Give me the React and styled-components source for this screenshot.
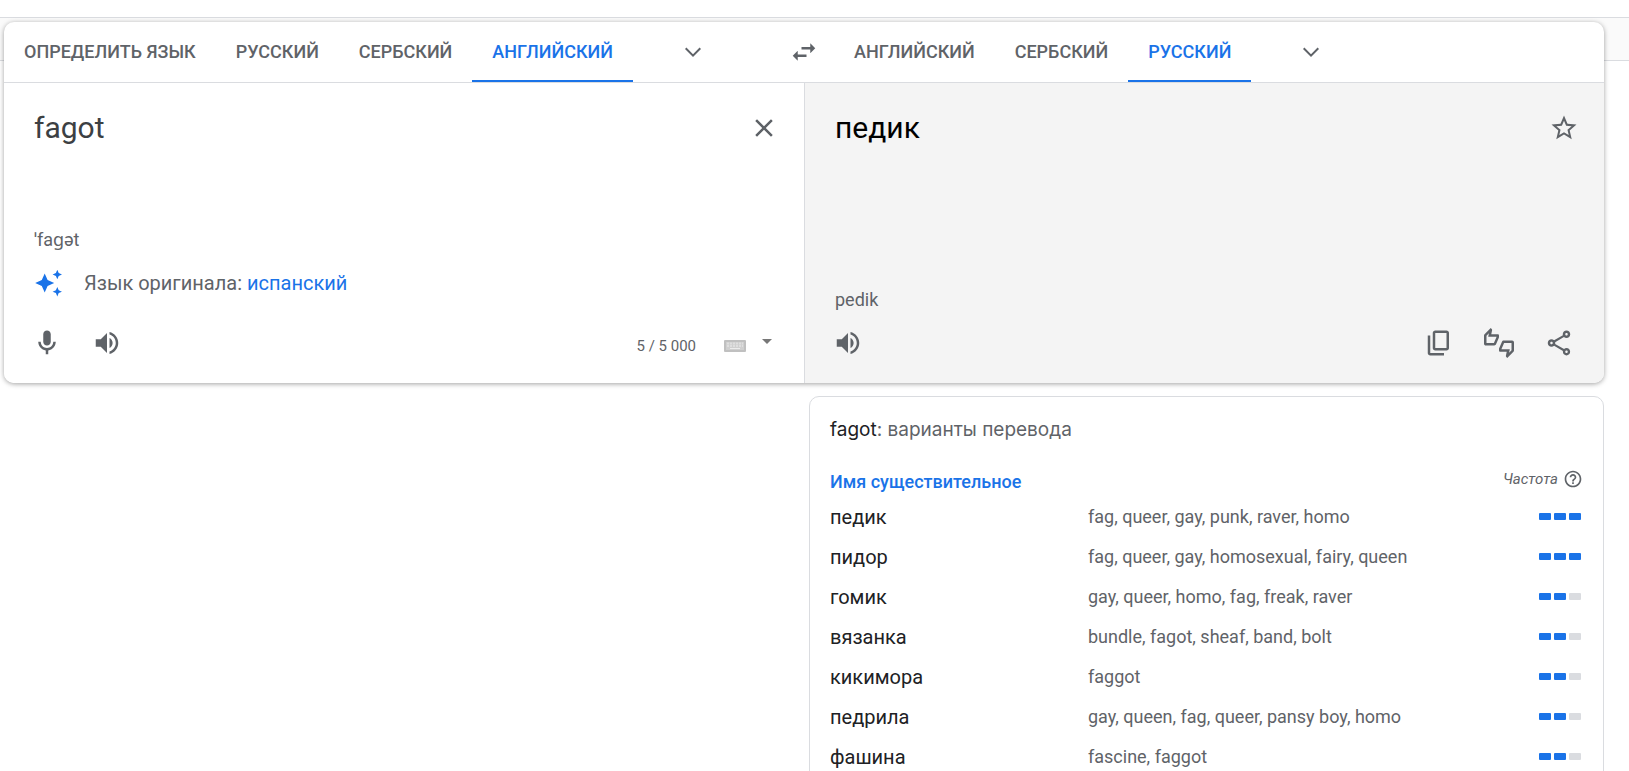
import React from "react";
import styled, { createGlobalStyle } from "styled-components";

const GlobalStyle = createGlobalStyle`
  *, *::before, *::after { box-sizing: border-box; }
  body {
    margin: 0;
    background: #fff;
    color: #5f6368;
    font-family: Roboto, "Noto Sans", sans-serif;
  }
  button, textarea { font: inherit; color: inherit; }
`;

const TopBar = styled.header`
  height: 18px;
  border-bottom: 1px solid #dadce0;
`;

const Band = styled.div`
  height: 43px;
  background: #fafafa;
  border-bottom: 1px solid #dadce0;
`;

const Main = styled.main`
  margin: -39px 25px 0 4px;
`;

const Translator = styled.section`
  position: relative;
  border-radius: 10px;
  background: #fff;
  box-shadow: 0 1px 5px 0 rgba(0, 0, 0, 0.37);
  overflow: hidden;
`;

const LanguageBar = styled.div`
  display: flex;
  height: 61px;
  border-bottom: 1px solid #dadce0;
`;

const LanguageSide = styled.div`
  flex: 1 1 0;
  display: flex;
  min-width: 0;
`;

const Tab = styled.button`
  height: 60px;
  padding: 2px 20px 0;
  border: 0;
  border-bottom: 2px solid ${(p) => (p.$active ? "#1a73e8" : "transparent")};
  background: none;
  color: ${(p) => (p.$active ? "#1a73e8" : "#5f6368")};
  font-size: 18px;
  font-weight: 500;
  line-height: 24px;
  white-space: nowrap;
  text-transform: uppercase;
  cursor: pointer;
`;

const IconButton = styled.button`
  display: flex;
  flex: none;
  align-items: center;
  justify-content: center;
  width: ${(p) => p.$width || 60}px;
  height: ${(p) => p.$height || 60}px;
  padding: 0;
  border: 0;
  background: none;
  color: #5f6368;
  cursor: pointer;
`;

const MoreButton = styled(IconButton)`
  margin-left: 40px;
`;

const Panes = styled.div`
  display: grid;
  grid-template-columns: 1fr 1fr;
`;

const Pane = styled.div`
  display: flex;
  flex-direction: column;
  min-height: 300px;
  padding: 25px 0 10px;
  background: ${(p) => (p.$target ? "#f4f4f4" : "#fff")};
  border-left: ${(p) => (p.$target ? "1px solid #dadce0" : "0")};
`;

const TextRow = styled.div`
  flex: 1;
  display: flex;
  align-items: flex-start;
  padding: 0 20px 0 30px;
`;

const SourceText = styled.textarea`
  flex: 1;
  height: 80px;
  padding: 0;
  border: 0;
  outline: 0;
  resize: none;
  background: none;
  color: #3c4043;
  font-size: 30px;
  line-height: 40px;
`;

const TargetText = styled.div`
  flex: 1;
  color: #000;
  font-size: 30px;
  line-height: 40px;
`;

const Phonetic = styled.div`
  padding: 0 30px 1px;
  font-size: 18px;
  line-height: 25px;
`;

const Suggestion = styled.div`
  display: flex;
  align-items: center;
  gap: 20px;
  height: 60px;
  padding: 0 30px;
  font-size: 20px;
  line-height: 30px;
`;

const LanguageLink = styled.a`
  color: #1a73e8;
  text-decoration: none;
`;

const Toolbar = styled.div`
  display: flex;
  align-items: center;
  height: 60px;
  padding: 0 15px 0 13px;
`;

const Spacer = styled.div`
  flex: 1;
`;

const Counter = styled.span`
  padding-top: 5px;
  margin-right: 28px;
  font-size: 15px;
  line-height: 20px;
`;

const InputTools = styled.div`
  display: flex;
  align-items: flex-start;
  gap: 16px;
  margin-right: 17px;
`;

const DetailsColumn = styled.div`
  margin: 13px 0 0 calc(50% + 5px);
`;

const Details = styled.section`
  padding: 19px 22px 10px 20px;
  border: 1px solid #dadce0;
  border-radius: 10px;
`;

const DetailsTitle = styled.h2`
  margin: 0;
  color: #5f6368;
  font-family: Inter, Roboto, sans-serif;
  font-size: 19px;
  font-weight: 400;
  line-height: 28px;
`;

const TitleWord = styled.span`
  color: #202124;
`;

const Variants = styled.table`
  width: 100%;
  margin-top: 22px;
  border-collapse: collapse;
  table-layout: fixed;
`;

const PartOfSpeech = styled.th`
  height: 31px;
  padding: 0;
  color: #1a73e8;
  font-size: 18px;
  font-weight: 500;
  line-height: 24px;
  text-align: left;
`;

const FrequencyHead = styled.th`
  padding: 0 0 6px;
  font-size: 15px;
  font-weight: 400;
  font-style: italic;
  line-height: 20px;
`;

const FrequencyLabel = styled.div`
  display: flex;
  align-items: center;
  justify-content: flex-end;
  gap: 5px;
  margin-right: -2px;
`;

const Word = styled.th`
  height: 40px;
  padding: 0;
  color: #202124;
  font-size: 20px;
  font-weight: 400;
  line-height: 30px;
  text-align: left;
`;

const Meanings = styled.td`
  padding: 0;
  font-size: 18px;
  line-height: 30px;
`;

const FrequencyCell = styled.td`
  padding: 0 0 2px;
`;

const Bars = styled.div`
  display: flex;
  justify-content: flex-end;
  gap: 3px;
`;

const Bar = styled.span`
  width: 12px;
  height: 7px;
  border-radius: 1px;
  background: ${(p) => (p.$on ? "#1a73e8" : "#dadce0")};
`;

const paths = {
  chevron: "M5.41 7.59L4 9l8 8 8-8-1.41-1.41L12 14.17z",
  swap: "M6.99 11L3 15l3.99 4v-3H14v-2H6.99v-3zM21 9l-3.99-4v3H10v2h7.01v3L21 9z",
  close:
    "M19 6.41L17.59 5 12 10.59 6.41 5 5 6.41 10.59 12 5 17.59 6.41 19 12 13.41 17.59 19 19 17.59 13.41 12z",
  star: "M22 9.24l-7.19-.62L12 2 9.19 8.63 2 9.24l5.46 4.73L5.82 21 12 17.27 18.18 21l-1.63-7.03L22 9.24zM12 15.4l-3.76 2.27 1-4.28-3.32-2.88 4.38-.38L12 6.1l1.71 4.04 4.38.38-3.32 2.88 1 4.28L12 15.4z",
  mic: "M12 14c1.66 0 3-1.34 3-3V5c0-1.66-1.34-3-3-3S9 3.34 9 5v6c0 1.66 1.34 3 3 3zM17 11c0 2.76-2.24 5-5 5s-5-2.24-5-5H5c0 3.53 2.61 6.43 6 6.92V21h2v-3.08c3.39-.49 6-3.39 6-6.92h-2z",
  speaker:
    "M3 9v6h4l5 5V4L7 9H3zm13.5 3c0-1.77-1.02-3.29-2.5-4.03v8.05c1.48-.73 2.5-2.25 2.5-4.02zM14 3.23v2.06c2.89.86 5 3.54 5 6.71s-2.11 5.85-5 6.71v2.06c4.01-.91 7-4.49 7-8.77s-2.99-7.86-7-8.77z",
  copy: "M9 18q-.825 0-1.412-.587T7 16V4q0-.825.588-1.413T9 2h9q.825 0 1.413.588T20 4v12q0 .825-.587 1.413T18 18zm0-2h9V4H9zm-4 6q-.825 0-1.412-.587T3 20V6h2v14h11v2z",
  rate: "M12 6c0-.55-.45-1-1-1H5.82l.66-3.18.02-.23c0-.31-.13-.59-.33-.8L5.38 0 .44 4.94C.17 5.21 0 5.59 0 6v6.5c0 .83.67 1.5 1.5 1.5h6.75c.62 0 1.15-.38 1.38-.91l2.26-5.29c.07-.17.11-.36.11-.55V6zm-2 1.13L7.92 12H2V6.21l1.93-1.93L3.36 7H10v.13zM22.5 10h-6.75c-.62 0-1.15.38-1.38.91l-2.26 5.29c-.07.17-.11.36-.11.55V18c0 .55.45 1 1 1h5.18l-.66 3.18-.02.24c0 .31.13.59.33.8l.79.78 4.94-4.94c.27-.27.44-.65.44-1.06v-6.5c0-.83-.67-1.5-1.5-1.5zm-.5 7.79l-1.93 1.93.57-2.72H14v-.13L16.08 12H22v5.79z",
  share:
    "M18 16.08c-.76 0-1.44.3-1.96.77L8.91 12.7c.05-.23.09-.46.09-.7s-.04-.47-.09-.7l7.05-4.11c.54.5 1.25.81 2.04.81 1.66 0 3-1.34 3-3s-1.34-3-3-3-3 1.34-3 3c0 .24.04.47.09.7L8.04 9.81C7.5 9.31 6.79 9 6 9c-1.66 0-3 1.34-3 3s1.34 3 3 3c.79 0 1.5-.31 2.04-.81l7.12 4.16c-.05.21-.08.43-.08.65 0 1.61 1.31 2.92 2.92 2.92s2.92-1.31 2.92-2.92-1.31-2.92-2.92-2.92zM18 4c.55 0 1 .45 1 1s-.45 1-1 1-1-.45-1-1 .45-1 1-1zM6 13c-.55 0-1-.45-1-1s.45-1 1-1 1 .45 1 1-.45 1-1 1zm12 7.02c-.55 0-1-.45-1-1s.45-1 1-1 1 .45 1 1-.45 1-1 1z",
  help: "M11 18h2v-2h-2v2zm1-16C6.48 2 2 6.48 2 12s4.48 10 10 10 10-4.48 10-10S17.52 2 12 2zm0 18c-4.41 0-8-3.59-8-8s3.59-8 8-8 8 3.59 8 8-3.59 8-8 8zm0-14c-2.21 0-4 1.79-4 4h2c0-1.1.9-2 2-2s2 .9 2 2c0 2-3 1.75-3 5h2c0-2.25 3-2.5 3-5 0-2.21-1.79-4-4-4z",
};

function Icon({ name, size = 30 }) {
  return (
    <svg width={size} height={size} viewBox="0 0 24 24" fill="currentColor" aria-hidden="true">
      <path d={paths[name]} />
    </svg>
  );
}

function Sparkles() {
  return (
    <svg width="30" height="30" viewBox="0 0 30 30" fill="#1a73e8" aria-hidden="true">
      <path d="M10.7 5.5L13.6 12.1 20.2 15 13.6 17.9 10.7 24.5 7.8 17.9 1.2 15 7.8 12.1z" />
      <path d="M23.3 1.8L24.7 5.1 28 6.5 24.7 7.9 23.3 11.2 21.9 7.9 18.6 6.5 21.9 5.1z" />
      <path d="M23.3 19L24.7 22.3 28 23.7 24.7 25.1 23.3 28.4 21.9 25.1 18.6 23.7 21.9 22.3z" />
    </svg>
  );
}

function Keyboard() {
  return (
    <svg width="22" height="20" viewBox="0 0 22 20" aria-hidden="true">
      <rect y="7" width="22" height="12" rx="1" fill="#c0c0c0" />
      <rect x="2" y="9" width="18" height="8" fill="#cfcfcf" />
      <path d="M3 10.5h16M3 13h16" stroke="#dedede" strokeWidth="2" strokeDasharray="2 1" />
      <path d="M6 15.5h10" stroke="#ececec" strokeWidth="1" />
    </svg>
  );
}

function Caret() {
  return (
    <svg width="10" height="10" viewBox="0 0 10 10" aria-hidden="true">
      <path d="M0 4h10L5 9z" fill="#777" />
    </svg>
  );
}

const sourceLanguages = ["Определить язык", "Русский", "Сербский", "Английский"];
const targetLanguages = ["Английский", "Сербский", "Русский"];

const variants = [
  ["педик", "fag, queer, gay, punk, raver, homo", 3],
  ["пидор", "fag, queer, gay, homosexual, fairy, queen", 3],
  ["гомик", "gay, queer, homo, fag, freak, raver", 2],
  ["вязанка", "bundle, fagot, sheaf, band, bolt", 2],
  ["кикимора", "faggot", 2],
  ["педрила", "gay, queen, fag, queer, pansy boy, homo", 2],
  ["фашина", "fascine, faggot", 2],
];

function LanguageTabs({ languages, active }) {
  return (
    <LanguageSide>
      {languages.map((name) => (
        <Tab key={name} type="button" $active={name === active} aria-pressed={name === active}>
          {name}
        </Tab>
      ))}
      <MoreButton type="button" $width={40} aria-label="Другие языки">
        <Icon name="chevron" size={24} />
      </MoreButton>
    </LanguageSide>
  );
}

export default function App() {
  return (
    <>
      <GlobalStyle />
      <TopBar />
      <Band />
      <Main>
        <Translator>
          <LanguageBar>
            <LanguageTabs languages={sourceLanguages} active="Английский" />
            <IconButton type="button" aria-label="Поменять языки местами">
              <Icon name="swap" />
            </IconButton>
            <LanguageTabs languages={targetLanguages} active="Русский" />
          </LanguageBar>
          <Panes>
            <Pane>
              <TextRow>
                <SourceText aria-label="Исходный текст" defaultValue="fagot" spellCheck={false} />
                <IconButton type="button" $width={40} $height={40} aria-label="Очистить">
                  <Icon name="close" />
                </IconButton>
              </TextRow>
              <Phonetic>ˈfaɡət</Phonetic>
              <Suggestion>
                <Sparkles />
                <span>
                  Язык оригинала: <LanguageLink href="#es">испанский</LanguageLink>
                </span>
              </Suggestion>
              <Toolbar>
                <IconButton type="button" aria-label="Голосовой ввод">
                  <Icon name="mic" />
                </IconButton>
                <IconButton type="button" aria-label="Прослушать">
                  <Icon name="speaker" />
                </IconButton>
                <Spacer />
                <Counter>5 / 5 000</Counter>
                <InputTools>
                  <IconButton type="button" $width={22} $height={20} aria-label="Экранная клавиатура">
                    <Keyboard />
                  </IconButton>
                  <IconButton type="button" $width={10} $height={14} aria-label="Способ ввода">
                    <Caret />
                  </IconButton>
                </InputTools>
              </Toolbar>
            </Pane>
            <Pane $target>
              <TextRow>
                <TargetText>педик</TargetText>
                <IconButton type="button" $width={40} $height={40} aria-label="Сохранить перевод">
                  <Icon name="star" />
                </IconButton>
              </TextRow>
              <Phonetic>pedik</Phonetic>
              <Toolbar>
                <IconButton type="button" aria-label="Прослушать перевод">
                  <Icon name="speaker" />
                </IconButton>
                <Spacer />
                <IconButton type="button" aria-label="Копировать">
                  <Icon name="copy" />
                </IconButton>
                <IconButton type="button" aria-label="Оценить перевод">
                  <Icon name="rate" />
                </IconButton>
                <IconButton type="button" aria-label="Поделиться">
                  <Icon name="share" />
                </IconButton>
              </Toolbar>
            </Pane>
          </Panes>
        </Translator>
        <DetailsColumn>
          <Details>
            <DetailsTitle>
              <TitleWord>fagot</TitleWord>: варианты перевода
            </DetailsTitle>
            <Variants>
              <colgroup>
                <col width="258" />
                <col />
                <col width="100" />
              </colgroup>
              <thead>
                <tr>
                  <PartOfSpeech scope="col" colSpan={2}>
                    Имя существительное
                  </PartOfSpeech>
                  <FrequencyHead scope="col">
                    <FrequencyLabel>
                      Частота <Icon name="help" size={20} />
                    </FrequencyLabel>
                  </FrequencyHead>
                </tr>
              </thead>
              <tbody>
                {variants.map(([word, meanings, level]) => (
                  <tr key={word}>
                    <Word scope="row">{word}</Word>
                    <Meanings>{meanings}</Meanings>
                    <FrequencyCell>
                      <Bars>
                        {[1, 2, 3].map((step) => (
                          <Bar key={step} $on={step <= level} />
                        ))}
                      </Bars>
                    </FrequencyCell>
                  </tr>
                ))}
              </tbody>
            </Variants>
          </Details>
        </DetailsColumn>
      </Main>
    </>
  );
}
